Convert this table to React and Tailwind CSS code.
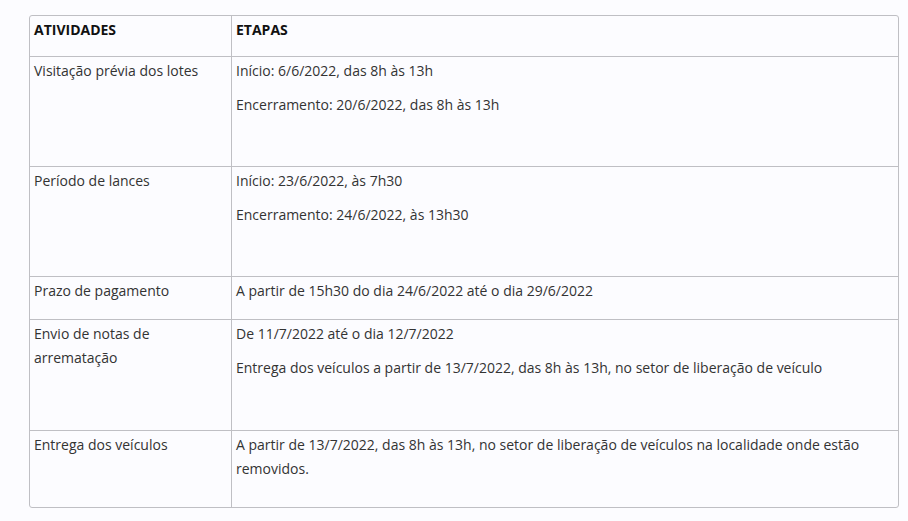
const rows = [
  {
    atividade: 'Visitação prévia dos lotes',
    etapas: ['Início: 6/6/2022, das 8h às 13h', 'Encerramento: 20/6/2022, das 8h às 13h'],
    h: 'h-[110px]',
  },
  {
    atividade: 'Período de lances',
    etapas: ['Início: 23/6/2022, às 7h30', 'Encerramento: 24/6/2022, às 13h30'],
    h: 'h-[110px]',
  },
  {
    atividade: 'Prazo de pagamento',
    etapas: ['A partir de 15h30 do dia 24/6/2022 até o dia 29/6/2022'],
    h: 'h-[43px]',
  },
  {
    atividade: 'Envio de notas de arrematação',
    etapas: [
      'De 11/7/2022 até o dia 12/7/2022',
      'Entrega dos veículos a partir de 13/7/2022, das 8h às 13h, no setor de liberação de veículo',
    ],
    h: 'h-[111px]',
  },
  {
    atividade: 'Entrega dos veículos',
    etapas: [
      'A partir de 13/7/2022, das 8h às 13h, no setor de liberação de veículos na localidade onde estão removidos.',
    ],
    h: 'h-[76px]',
  },
];

export default function App() {
  return (
    <div className="min-h-screen w-[908px] h-[521px] bg-[#fcfcff] pt-[15px] pl-[29px] font-['Open_Sans',sans-serif] text-[14px] leading-[24px] text-[#333]">
      <div className="w-[870px] border border-[#bfbfc4] rounded-[3px]">
        {/* cabeçalho */}
        <div className="flex h-[41px] border-b border-[#bfbfc4] font-bold text-[#111]">
          <div className="w-[202px] border-r border-[#bfbfc4] pl-[4px] pt-[2px]">ATIVIDADES</div>
          <div className="flex-1 pl-[4px] pt-[2px]">ETAPAS</div>
        </div>

        {rows.map((r, i) => (
          <div
            key={i}
            className={`flex ${r.h} ${i < rows.length - 1 ? 'border-b border-[#bfbfc4]' : ''}`}
          >
            <div className="w-[202px] border-r border-[#bfbfc4] pl-[4px] pr-[6px] pt-[2px]">{r.atividade}</div>
            <div className="flex-1 pl-[4px] pr-[10px] pt-[2px]">
              {r.etapas.map((t, j) => (
                <p key={j} className="mb-[10px]">
                  {t}
                </p>
              ))}
            </div>
          </div>
        ))}
      </div>
    </div>
  );
}
